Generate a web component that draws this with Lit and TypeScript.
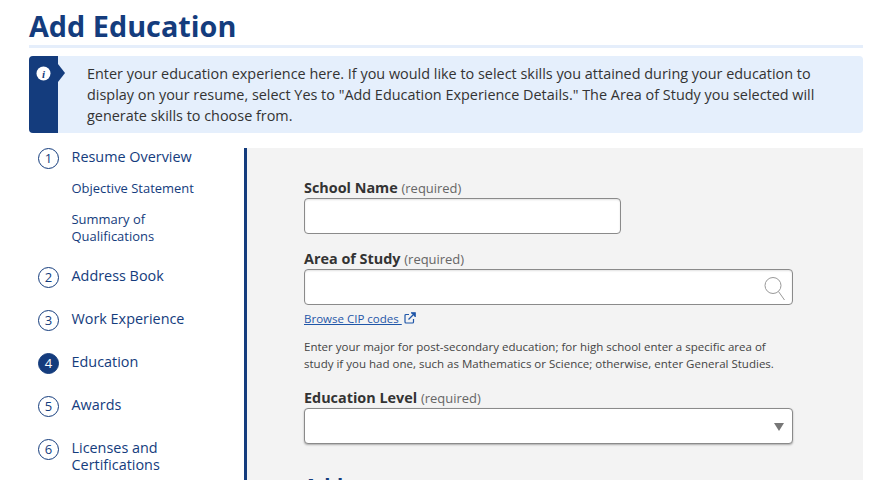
import { LitElement, html, css } from "lit";
import { customElement } from "lit/decorators.js";

@customElement("app-root")
export class AppRoot extends LitElement {
  static styles = css`
    :host { display: block; height: 480px; overflow: hidden; background: #fff; font-family: "Open Sans", sans-serif; color: #333; }
    .page { padding: 0 30px 0 29px; }
    h1 { margin: 0; padding-top: 6px; height: 39px; font-size: 28.8px; line-height: 40px; font-weight: 700; color: #143c7d; border-bottom: 3px solid #e5eefb; }
    .alert { margin-top: 8px; display: flex; background: #e5effc; border-radius: 4px; height: 77px; overflow: hidden; }
    .flag { width: 29px; flex: none; background: #143c7d; position: relative; display: flex; justify-content: center; align-items: flex-start; padding-top: 10px; box-sizing: border-box; }
    .flag::after { content: ""; position: absolute; left: 29px; top: 8px; border-left: 7px solid #143c7d; border-top: 9px solid transparent; border-bottom: 9px solid transparent; }
    .alert p { margin: 0; padding: 7px 20px 0 29px; font-size: 14.42px; line-height: 21px; color: #333; }
    .main { margin-top: 15px; display: flex; align-items: flex-start; }
    nav { width: 215px; flex: none; box-sizing: border-box; padding-left: 9px; }
    .step { display: flex; gap: 12.5px; margin-bottom: 22px; color: #143c7d; font-size: 14.4px; line-height: 17px; }
    .num { width: 19px; height: 19px; flex: none; border: 1px solid #143c7d; border-radius: 50%; display: flex; align-items: center; justify-content: center; font-size: 13px; line-height: 1; }
    .num.on { background: #143c7d; color: #fff; }
    .step .t { width: 130px; }
    .subs { margin: -11px 0 22px 33.5px; font-size: 12.96px; line-height: 17px; color: #143c7d; width: 130px; }
    .subs div { margin-bottom: 14px; }
    .subs div:last-child { margin-bottom: 0; }
    .panel { flex: 1; height: 340px; background: #f3f3f3; border-left: 3px solid #143c7d; padding: 31px 70px 0 57px; box-sizing: border-box; }
    .lab { height: 18px; font-size: 14.4px; font-weight: 700; line-height: 18px; color: #333; }
    .lab span { font-size: 12.96px; font-weight: 400; color: #666; }
    .box { box-sizing: border-box; height: 36px; background: #fff; border: 1px solid #8a8a8a; border-radius: 4px; margin-top: 1px; box-shadow: inset 0 1px 2px rgba(0,0,0,0.12); position: relative; }
    .school { width: 317px; margin-bottom: 16px; }
    .sel { box-shadow: 0 1px 2px rgba(0,0,0,0.3); }
    .mag { position: absolute; right: 7px; top: 7px; }
    .caret { position: absolute; right: 8px; top: 14px; border-top: 8px solid #777; border-left: 5px solid transparent; border-right: 5px solid transparent; }
    .link { display: flex; align-items: center; gap: 2px; margin-top: 5px; height: 16px; font-size: 11.52px; color: #1f56a8; }
    .link a { color: inherit; text-decoration: underline; }
    .help { margin: 12px 0 0; font-size: 11.52px; line-height: 17px; color: #444; white-space: nowrap; }
    .lv { margin-top: 17px; }
    .addh { margin-top: 29px; font-size: 20px; line-height: 26px; font-weight: 700; color: #143c7d; }
  `;

  render() {
    const step = (n: number, t: string, on = false) => html`<div class="step"><div class="num ${on ? "on" : ""}">${n}</div><div class="t">${t}</div></div>`;
    return html`<div class="page">
      <h1>Add Education</h1>
      <div class="alert">
        <div class="flag"><svg width="15" height="15" viewBox="0 0 15 15"><circle cx="7.5" cy="7.5" r="7" fill="#fff"/><text x="7.5" y="11.5" text-anchor="middle" font-family="Liberation Serif, serif" font-style="italic" font-weight="700" font-size="11" fill="#143c7d">i</text></svg></div>
        <p>Enter your education experience here. If you would like to select skills you attained during your education to display on your resume, select Yes to "Add Education Experience Details." The Area of Study you selected will generate skills to choose from.</p>
      </div>
      <div class="main">
        <nav>
          ${step(1, "Resume Overview")}
          <div class="subs"><div>Objective Statement</div><div>Summary of Qualifications</div></div>
          ${step(2, "Address Book")}
          ${step(3, "Work Experience")}
          ${step(4, "Education", true)}
          ${step(5, "Awards")}
          ${step(6, "Licenses and Certifications")}
        </nav>
        <div class="panel">
          <div class="lab">School Name <span>(required)</span></div>
          <div class="box school"></div>
          <div class="lab">Area of Study <span>(required)</span></div>
          <div class="box"><svg class="mag" width="21" height="24" viewBox="0 0 21 24" fill="none" stroke="#999" stroke-width="1"><circle cx="9" cy="8.5" r="8"/><path d="M14.5 14.5 L20.5 23"/></svg></div>
          <div class="link"><a href="#">Browse CIP codes&nbsp;</a><svg width="12" height="12" viewBox="0 0 12 12" fill="none" stroke="#1f56a8" stroke-width="1.2"><path d="M5 2.5H2a1 1 0 0 0-1 1V10a1 1 0 0 0 1 1h6.5a1 1 0 0 0 1-1V7"/><path d="M4.5 7.5 10 2"/><path d="M7 .8h4.2V5" fill="#1f56a8"/></svg></div>
          <p class="help">Enter your major for post-secondary education; for high school enter a specific area of<br>study if you had one, such as Mathematics or Science; otherwise, enter General Studies.</p>
          <div class="lab lv">Education Level <span>(required)</span></div>
          <div class="box sel"><div class="caret"></div></div>
          <div class="addh">Add</div>
        </div>
      </div>
    </div>`;
  }
}
